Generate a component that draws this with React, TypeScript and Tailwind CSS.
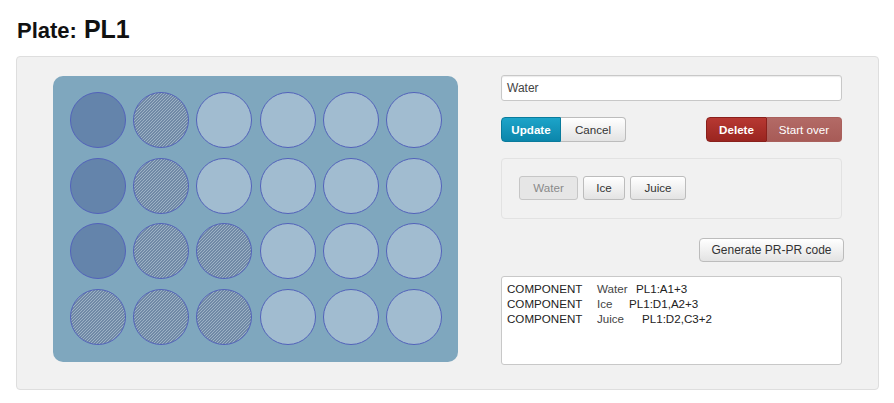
import React from "react";

type Kind = "dark" | "hatch" | "light";

const rows: Kind[][] = [
  ["dark", "hatch", "light", "light", "light", "light"],
  ["dark", "hatch", "light", "light", "light", "light"],
  ["dark", "hatch", "hatch", "light", "light", "light"],
  ["hatch", "hatch", "hatch", "light", "light", "light"],
];

function Well({ kind }: { kind: Kind }) {
  if (kind === "dark")
    return <div className="w-[56px] h-[56px] rounded-full border-[1.5px] border-[#5262ba] bg-[#6484ab]" />;
  if (kind === "hatch")
    return (
      <div className="w-[56px] h-[56px] rounded-full border-[1.5px] border-[#5262ba] bg-[#8aa1b8] bg-[image:linear-gradient(-45deg,#7089a6_25%,#9db2c5_25%,#9db2c5_50%,#7089a6_50%,#7089a6_75%,#9db2c5_75%)] bg-[length:3px_3px]" />
    );
  return <div className="w-[56px] h-[56px] rounded-full border-[1.5px] border-[#5262ba] bg-[#a1bcd0]" />;
}

const lines = [
  { name: "Water", w: "w-[39px]", wells: "PL1:A1+3" },
  { name: "Ice", w: "w-[32px]", wells: "PL1:D1,A2+3" },
  { name: "Juice", w: "w-[45px]", wells: "PL1:D2,C3+2" },
];

export default function App() {
  return (
    <div className="font-['Liberation_Sans',Arial,sans-serif] text-[#333] bg-white w-[894px] h-[403px]">
      <h1 className="ml-[17px] pt-[14px] leading-[30px] flex items-baseline font-bold text-[#111]">
        <span className="text-[22px]">Plate:</span>
        <span className="text-[25px] ml-[7px]">PL1</span>
      </h1>
      <div className="ml-[16px] mt-[10px] w-[863px] h-[334px] bg-[#f1f1f1] border border-[#dedede] rounded-[4px] pl-[36px] pt-[19px] flex items-start">
        <div className="w-[405px] h-[286px] rounded-[10px] bg-[#7fa7be] pl-[17px] pt-[16px] grid grid-cols-[repeat(6,56px)] gap-x-[7.2px] gap-y-[9.7px] content-start">
          {rows.flat().map((k, i) => (
            <Well key={i} kind={k} />
          ))}
        </div>
        <div className="ml-[43px] w-[341px] -mt-[1px] flex flex-col text-[11.6px]">
          <div className="h-[26px] bg-white border border-[#c8c8c8] rounded-[3px] shadow-[inset_0_1px_1px_rgba(0,0,0,0.08)] flex items-center pl-[5px] text-[12px] text-[#444]">
            Water
          </div>
          <div className="mt-[16px] flex justify-between h-[25px]">
            <div className="flex">
              <button className="w-[60px] h-[25px] rounded-l-[4px] border border-[#0a7b9c] bg-linear-to-b from-[#1ca4c9] to-[#0b86ab] text-white font-bold flex items-center justify-center">
                Update
              </button>
              <button className="w-[65px] h-[25px] rounded-r-[4px] border border-l-0 border-[#bcbcbc] bg-linear-to-b from-white to-[#e3e3e3] text-[#333] flex items-center justify-center">
                Cancel
              </button>
            </div>
            <div className="flex">
              <button className="w-[61px] h-[25px] rounded-l-[4px] border border-[#8a201c] bg-linear-to-b from-[#b73832] to-[#9a2520] text-white font-bold flex items-center justify-center">
                Delete
              </button>
              <button className="w-[75px] h-[25px] rounded-r-[4px] border border-l-0 border-[#a9605c] bg-linear-to-b from-[#b36a66] to-[#a75b57] text-white flex items-center justify-center">
                Start over
              </button>
            </div>
          </div>
          <div className="mt-[16px] h-[61px] border border-[#e2e2e2] rounded-[4px] bg-[#f1f1f1] pl-[17px] pt-[17px] flex items-start gap-[5px]">
            <button className="w-[59px] h-[24px] rounded-[3px] border border-[#c6c6c6] bg-[#e6e6e6] text-[#8a8a8a] flex items-center justify-center">
              Water
            </button>
            <button className="w-[42px] h-[24px] rounded-[3px] border border-[#bcbcbc] bg-linear-to-b from-white to-[#e3e3e3] text-[#333] flex items-center justify-center">
              Ice
            </button>
            <button className="w-[56px] h-[24px] rounded-[3px] border border-[#bcbcbc] bg-linear-to-b from-white to-[#e3e3e3] text-[#333] flex items-center justify-center">
              Juice
            </button>
          </div>
          <div className="mt-[19px] flex justify-end -mr-[2px]">
            <button className="w-[145px] h-[24px] rounded-[4px] border border-[#bcbcbc] bg-linear-to-b from-white to-[#e3e3e3] text-[#333] text-[12px] flex items-center justify-center">
              Generate PR-PR code
            </button>
          </div>
          <div className="mt-[14px] h-[89px] bg-white border border-[#c8c8c8] rounded-[3px] pl-[5px] pt-[4px] leading-[15px] text-[#222]">
            {lines.map((l) => (
              <div key={l.name} className="flex whitespace-nowrap">
                <span className="w-[90px]">COMPONENT</span>
                <span className={l.w + " text-[#444]"}>{l.name}</span>
                <span>{l.wells}</span>
              </div>
            ))}
          </div>
        </div>
      </div>
    </div>
  );
}
